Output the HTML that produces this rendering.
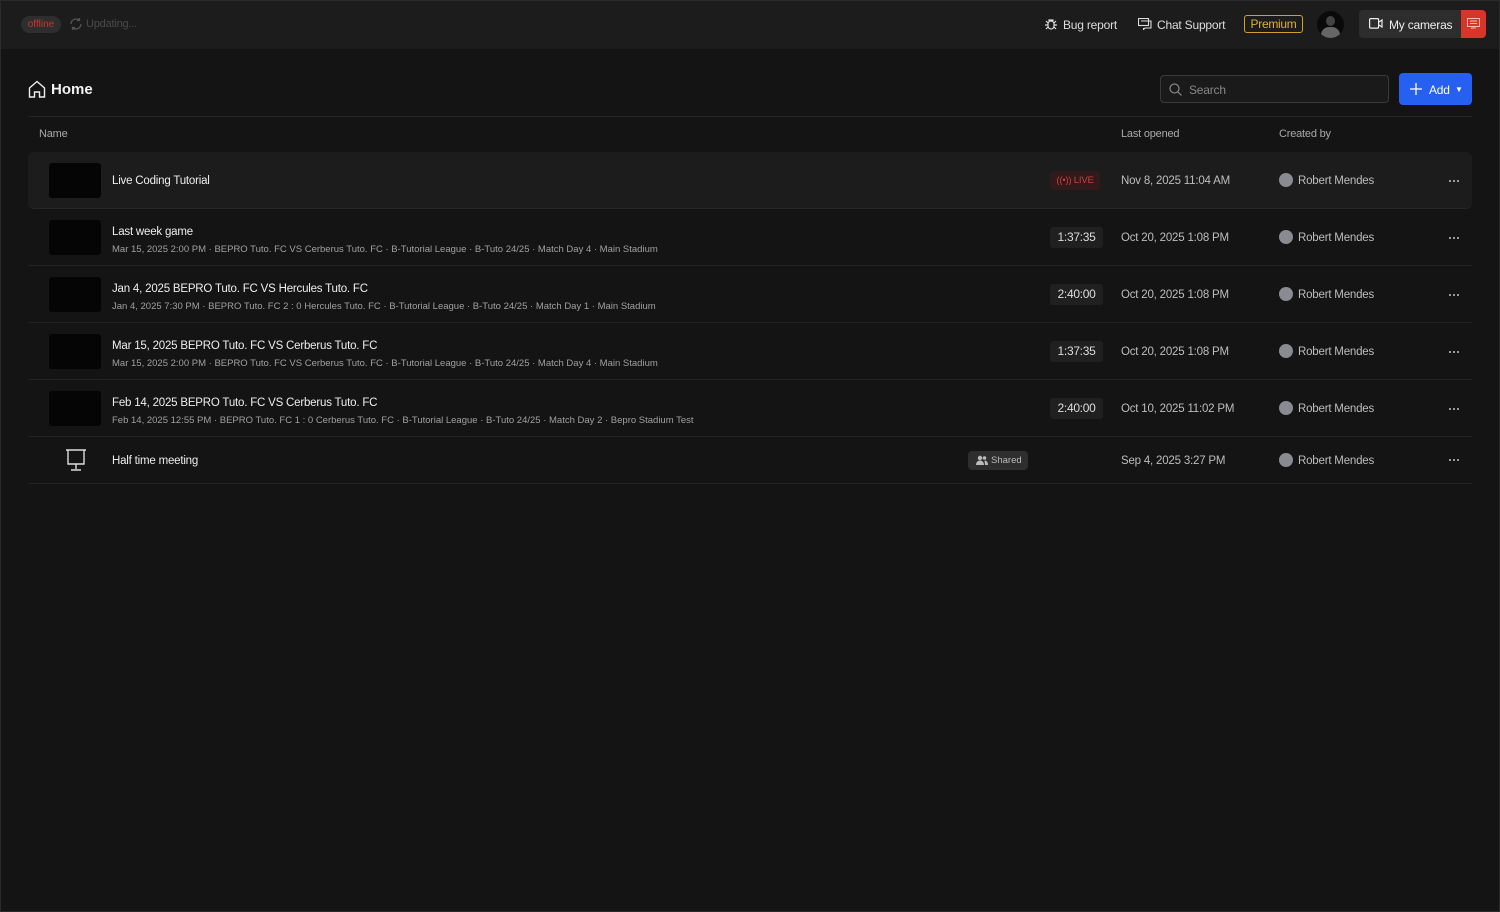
<!DOCTYPE html>
<html><head><style>
*{box-sizing:border-box;margin:0;padding:0}
body{width:1500px;height:912px;background:#141414;font-family:"Liberation Sans",sans-serif;color:#e6e6e6;position:relative;overflow:hidden}
.frame{position:absolute;left:0;top:0;width:1500px;height:912px;border:1px solid #2a2a2a;pointer-events:none}
.top{position:absolute;left:0;top:0;width:1500px;height:49px;background:#1c1c1c}
.a{position:absolute}
.t{font-size:12px;letter-spacing:-0.2px}
.row{position:absolute;left:28px;width:1444px;height:57px;border-bottom:1px solid #222}
.thumb{position:absolute;left:21px;top:11px;width:52px;height:35px;background:#050505;border-radius:3px}
.title{position:absolute;left:84px;font-size:11.5px;letter-spacing:-0.2px;color:#eee}
.meta{position:absolute;left:84px;font-size:9.5px;color:#a0a0a0}
.dur{position:absolute;left:1022px;top:18px;width:53px;height:21px;background:#202020;border-radius:3px;font-size:12px;letter-spacing:-0.3px;text-align:center;line-height:21px;color:#ddd}
.date{position:absolute;left:1093px;font-size:11.5px;letter-spacing:-0.2px;color:#bdbdbd;top:23px}
.av{position:absolute;left:1251px;top:21px;width:14px;height:14px;border-radius:50%;background:#8a8b92}
.by{position:absolute;left:1270px;top:23px;font-size:11.5px;letter-spacing:-0.2px;color:#bdbdbd}
.dots{position:absolute;left:1420px;top:28px;width:12px;height:2px;background:radial-gradient(circle,#bbb 0.9px,transparent 1.1px) 0 0/4px 2px repeat-x}
</style></head><body>
<div class="top"></div>
<div class="a" style="left:21px;top:16px;width:40px;height:17px;border-radius:9px;background:#2e2e2e;color:#c33;font-size:10px;text-align:center;line-height:17px">offline</div>
<svg class="a" style="left:69px;top:17px" width="14" height="14" viewBox="0 0 14 14" fill="none" stroke="#555" stroke-width="1.3"><path d="M2 7a5 5 0 0 1 8.5-3.5M12 7a5 5 0 0 1-8.5 3.5M10.5 1v2.5H8M3.5 13v-2.5H6"/></svg>
<div class="a t" style="left:86px;top:18px;color:#4a4a4a;font-size:11px">Updating...</div>
<svg class="a" style="left:1044px;top:17px" width="14" height="14" viewBox="0 0 14 14" fill="none" stroke="#ddd" stroke-width="1.2"><rect x="4" y="4" width="6" height="8" rx="3"/><path d="M5 4V3h4v1M1 8h3M10 8h3M2 4l2 2M12 4l-2 2M2 12l2-2M12 12l-2-2"/></svg>
<div class="a t" style="left:1063px;top:18px;color:#ddd">Bug report</div>
<svg class="a" style="left:1138px;top:18px" width="14" height="12" viewBox="0 0 14 12" fill="none" stroke="#ddd" stroke-width="1.1"><rect x="0.5" y="0.5" width="10" height="7"/><path d="M3 3h10v7H7l-1.5 1.5V10"/></svg>
<div class="a t" style="left:1157px;top:18px;color:#ddd">Chat Support</div>
<div class="a" style="left:1244px;top:15px;width:59px;height:18px;border:1px solid #d3a12b;border-radius:3px;color:#e0b030;font-size:12px;letter-spacing:-0.3px;text-align:center;line-height:16px">Premium</div>
<div class="a" style="left:1317px;top:11px;width:27px;height:27px;border-radius:50%;background:#0a0a0a;overflow:hidden"><div class="a" style="left:9px;top:5px;width:9px;height:10px;border-radius:50%;background:#444"></div><div class="a" style="left:4px;top:16px;width:19px;height:14px;border-radius:8px 8px 0 0;background:#666"></div></div>
<div class="a" style="left:1359px;top:10px;width:103px;height:28px;background:#2d2d2d;border-radius:4px 0 0 4px"></div>
<svg class="a" style="left:1369px;top:18px" width="14" height="11" viewBox="0 0 14 11" fill="none" stroke="#eee" stroke-width="1.2"><rect x="0.6" y="0.6" width="9" height="9.5" rx="1"/><path d="M10 4l3-2v7l-3-2"/></svg>
<div class="a t" style="left:1389px;top:18px;color:#eee">My cameras</div>
<div class="a" style="left:1461px;top:10px;width:25px;height:28px;background:#d8352a;border-radius:0 4px 4px 0"></div>
<svg class="a" style="left:1467px;top:18px" width="13" height="11" viewBox="0 0 13 11" fill="none" stroke="#fbb" stroke-width="1"><rect x="0.5" y="0.5" width="12" height="8"/><path d="M3 3h7M3 5.5h7M4 10h5"/></svg>

<svg class="a" style="left:28px;top:80px" width="18" height="18" viewBox="0 0 18 18" fill="none" stroke="#eee" stroke-width="1.4"><path d="M1.5 8L9 1.5 16.5 8v9h-5v-5h-5v5h-5z"/></svg>
<div class="a" style="left:51px;top:81px;font-size:15px;font-weight:bold;color:#f2f2f2">Home</div>
<div class="a" style="left:1160px;top:75px;width:229px;height:28px;border:1px solid #3a3a3a;border-radius:4px;background:#1a1a1a"></div>
<svg class="a" style="left:1169px;top:83px" width="13" height="13" viewBox="0 0 13 13" fill="none" stroke="#888" stroke-width="1.2"><circle cx="5.5" cy="5.5" r="4.5"/><path d="M9 9l3.5 3.5"/></svg>
<div class="a t" style="left:1189px;top:83px;color:#888">Search</div>
<div class="a" style="left:1399px;top:73px;width:73px;height:32px;background:#2660f0;border-radius:4px"></div>
<svg class="a" style="left:1410px;top:83px" width="12" height="12" viewBox="0 0 12 12" stroke="#fff" stroke-width="1.3"><path d="M6 0v12M0 6h12"/></svg>
<div class="a t" style="left:1429px;top:83px;color:#fff">Add</div>
<div class="a" style="left:1455px;top:85px;font-size:8px;color:#fff">▼</div>
<div class="a" style="left:28px;top:116px;width:1444px;height:1px;background:#262626"></div>
<div class="a t" style="left:39px;top:128px;color:#aaa;font-size:11px">Name</div>
<div class="a t" style="left:1121px;top:128px;color:#aaa;font-size:11px">Last opened</div>
<div class="a t" style="left:1279px;top:128px;color:#aaa;font-size:11px">Created by</div>

<div class="row" style="top:152px;background:#1c1c1c;border-radius:6px;border-bottom:1px solid #262626">
<div class="thumb"></div><div class="title" style="top:23px">Live Coding Tutorial</div>
<div class="a" style="left:1022px;top:19px;width:50px;height:19px;background:#331a1a;border-radius:4px;color:#d03c3c;font-size:9.5px;letter-spacing:-0.2px;text-align:center;line-height:19px">((•)) LIVE</div>
<div class="date">Nov 8, 2025 11:04 AM</div><div class="av"></div><div class="by">Robert Mendes</div><div class="dots"></div></div>

<div class="row" style="top:209px"><div class="thumb"></div><div class="title" style="top:17px">Last week game</div>
<div class="meta" style="top:35px">Mar 15, 2025 2:00 PM · BEPRO Tuto. FC VS Cerberus Tuto. FC · B-Tutorial League · B-Tuto 24/25 · Match Day 4 · Main Stadium</div>
<div class="dur">1:37:35</div><div class="date">Oct 20, 2025 1:08 PM</div><div class="av"></div><div class="by">Robert Mendes</div><div class="dots"></div></div>

<div class="row" style="top:266px"><div class="thumb"></div><div class="title" style="top:17px">Jan 4, 2025 BEPRO Tuto. FC VS Hercules Tuto. FC</div>
<div class="meta" style="top:35px">Jan 4, 2025 7:30 PM · BEPRO Tuto. FC 2 : 0 Hercules Tuto. FC · B-Tutorial League · B-Tuto 24/25 · Match Day 1 · Main Stadium</div>
<div class="dur">2:40:00</div><div class="date">Oct 20, 2025 1:08 PM</div><div class="av"></div><div class="by">Robert Mendes</div><div class="dots"></div></div>

<div class="row" style="top:323px"><div class="thumb"></div><div class="title" style="top:17px">Mar 15, 2025 BEPRO Tuto. FC VS Cerberus Tuto. FC</div>
<div class="meta" style="top:35px">Mar 15, 2025 2:00 PM · BEPRO Tuto. FC VS Cerberus Tuto. FC · B-Tutorial League · B-Tuto 24/25 · Match Day 4 · Main Stadium</div>
<div class="dur">1:37:35</div><div class="date">Oct 20, 2025 1:08 PM</div><div class="av"></div><div class="by">Robert Mendes</div><div class="dots"></div></div>

<div class="row" style="top:380px"><div class="thumb"></div><div class="title" style="top:17px">Feb 14, 2025 BEPRO Tuto. FC VS Cerberus Tuto. FC</div>
<div class="meta" style="top:35px">Feb 14, 2025 12:55 PM · BEPRO Tuto. FC 1 : 0 Cerberus Tuto. FC · B-Tutorial League · B-Tuto 24/25 · Match Day 2 · Bepro Stadium Test</div>
<div class="dur">2:40:00</div><div class="date">Oct 10, 2025 11:02 PM</div><div class="av"></div><div class="by">Robert Mendes</div><div class="dots"></div></div>

<div class="row" style="top:437px;height:47px">
<svg class="a" style="left:37px;top:12px" width="22" height="23" viewBox="0 0 22 23" fill="none" stroke="#ddd" stroke-width="1.4"><path d="M1 1h20M3 1v14h16V1M11 15v5M6 21h10"/></svg>
<div class="title" style="top:18px">Half time meeting</div>
<div class="a" style="left:940px;top:14px;width:60px;height:19px;background:#2e2e2e;border-radius:4px;color:#bbb;font-size:9.5px;line-height:19px;padding-left:23px">Shared</div>
<svg class="a" style="left:948px;top:18px" width="12" height="10" viewBox="0 0 12 10" fill="#bbb"><circle cx="4" cy="3" r="2.2"/><path d="M0 10c0-3 2-4.5 4-4.5S8 7 8 10z"/><circle cx="8.5" cy="3" r="1.8"/><path d="M8.5 5.5c2 0 3.5 1.5 3.5 4.5H9z"/></svg>
<div class="date" style="top:18px">Sep 4, 2025 3:27 PM</div><div class="av" style="top:16px"></div><div class="by" style="top:18px">Robert Mendes</div><div class="dots" style="top:22px"></div></div>
<div class="frame"></div>
</body></html>
